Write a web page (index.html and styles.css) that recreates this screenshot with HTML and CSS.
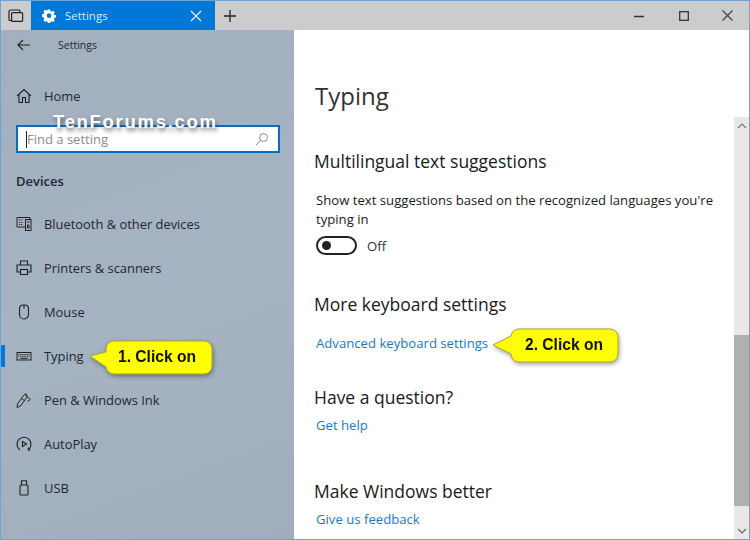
FILE: index.html
```html
<!DOCTYPE html>
<html>
	<head>
		<meta charset="utf-8"/>
		<title>Settings</title>
		<link rel="stylesheet" href="styles.css">
	</head>
	<body>
		<div class="window">
			<div class="titlebar">
				<div class="task-btn">
					<svg width="16" height="16" viewBox="0 0 16 16" fill="none" stroke="#222" stroke-width="1.2"><path d="M3.5 12.5h-1.5a1 1 0 0 1-1-1v-8a1.500 1.500 0 0 1 1.500-1.500h8.500a1 1 0 0 1 1 1v1"/><rect x="3.600" y="4.600" width="11" height="8.800" rx="1"/></svg>
				</div>
				<div class="tab">
					<svg class="tab-gear" width="14" height="14" viewBox="0 0 14 14"><path fill="#fff" fill-rule="evenodd" d="M5.800.5h2.400l.4 1.800 1.100.5 1.600-1 1.700 1.700-1 1.600.5 1.100 1.800.4v2.400l-1.800.4-.5 1.100 1 1.600-1.700 1.700-1.600-1-1.100.5-.4 1.800H5.800l-.4-1.800-1.100-.5-1.600 1L1 11.600l1-1.600-.5-1.100L-.3 8.500V5.500l1.800-.4.5-1.100-1-1.600L2.700.7l1.600 1 1.100-.5zM7 4.600a2.400 2.400 0 1 0 0 4.800 2.400 2.400 0 0 0 0-4.800z" transform="translate(.4 0) scale(.95)"/></svg>
					<span class="tab-name">Settings</span>
					<svg width="12" height="12" viewBox="0 0 12 12" stroke="#e8f2fb" stroke-width="1.300"><path d="M1 1l10 10M11 1L1 11"/></svg>
				</div>
				<div class="new-tab">
					<svg width="14" height="14" viewBox="0 0 14 14" stroke="#222" stroke-width="1.300"><path d="M7 1v12M1 7h12"/></svg>
				</div>
				<div class="win-btns">
					<div class="win-btn"><svg width="10" height="10" viewBox="0 0 10 10" stroke="#333" stroke-width="1.500"><path d="M0 5.500h10"/></svg></div>
					<div class="win-btn"><svg width="10" height="10" viewBox="0 0 10 10" fill="none" stroke="#333" stroke-width="1.300"><rect x=".7" y=".7" width="8.600" height="8.600"/></svg></div>
					<div class="win-btn"><svg width="11" height="11" viewBox="0 0 11 11" stroke="#444" stroke-width="1.200"><path d="M.5.5l10 10M10.500.5l-10 10"/></svg></div>
				</div>
			</div>
			<div class="content">
				<div class="sidebar">
					<div class="back-row">
						<svg width="14" height="12" viewBox="0 0 14 12" fill="none" stroke="#222" stroke-width="1.100"><path d="M13 6H1M6 1L1 6l5 5"/></svg>
						<span>Settings</span>
					</div>
					<div class="nav-item home-item">
						<svg width="16" height="16" viewBox="0 0 16 16" fill="none" stroke="#222" stroke-width="1.100"><path d="M1 8l7-6.500L15 8M3 6.500V14.500h3.500V9.500h3v5H13V6.500"/></svg>
						<span>Home</span>
					</div>
					<div class="search-box">
						<span class="caret"></span>
						<span class="search-txt">Find a setting</span>
						<svg width="14" height="14" viewBox="0 0 14 14" fill="none" stroke="#8a8a8a" stroke-width="1"><circle cx="8.500" cy="5.500" r="4"/><path d="M5.500 8.500L1 13"/></svg>
					</div>
					<div class="group-title">Devices</div>
					<div class="nav-item">
						<svg width="16" height="16" viewBox="0 0 16 16" fill="none" stroke="#222" stroke-width="1"><path d="M9 11H1V1.500h13V3"/><path d="M3 4h4M3 6.500h4M3 8.500h4" stroke-dasharray="1 .8"/><rect x="9.500" y="3.500" width="5.500" height="11"/><path d="M11 6h2.500M11.500 9h1.500v3h-1.500z"/></svg>
						<span>Bluetooth &amp; other devices</span>
					</div>
					<div class="nav-item">
						<svg width="16" height="16" viewBox="0 0 16 16" fill="none" stroke="#222" stroke-width="1.100"><path d="M4.500 5V1h7v4M4 12H1V5h14v7h-3"/><rect x="4.500" y="9.500" width="7" height="5"/></svg>
						<span>Printers &amp; scanners</span>
					</div>
					<div class="nav-item">
						<svg width="16" height="16" viewBox="0 0 16 16" fill="none" stroke="#222" stroke-width="1.100"><path d="M3.500 4.500a3.500 3.500 0 0 1 3-3.500h3a3.500 3.500 0 0 1 3 3.500v6a4.500 4.500 0 0 1-9 0zM8 1v3.500"/></svg>
						<span>Mouse</span>
					</div>
					<div class="nav-item active">
						<svg width="16" height="16" viewBox="0 0 16 16" fill="none" stroke="#222" stroke-width="1"><rect x="1" y="4.500" width="14" height="7.500"/><path d="M2.500 6.500h11M2.500 8.300h11" stroke-dasharray="1 .7"/><path d="M4.500 10.300h7"/></svg>
						<span>Typing</span>
					</div>
					<div class="nav-item">
						<svg width="16" height="16" viewBox="0 0 16 16" fill="none" stroke="#222" stroke-width="1"><path d="M1 15.500l.5-3.500 6-8.500c1-1.300 2.200-1.600 3-1s.8 1.900 0 3.200l-6 8.300z"/><path d="M5.500 6.500l3.300 2.300M9 1.500c1 .5.500 1.500 1.500 3s3.500 1.500 3.500 3c0 1-1.500 1.500-2.500 1.500"/></svg>
						<span>Pen &amp; Windows Ink</span>
					</div>
					<div class="nav-item">
						<svg width="16" height="16" viewBox="0 0 16 16" fill="none" stroke="#222" stroke-width="1.100"><path d="M4 14A7 7 0 1 1 12 14M12 14l.5-2.500M12 14l2.500.3"/><path d="M6.500 5.500l4 2.500-4 2.500z"/></svg>
						<span>AutoPlay</span>
					</div>
					<div class="nav-item">
						<svg width="16" height="16" viewBox="0 0 16 16" fill="none" stroke="#222" stroke-width="1.100"><path d="M5.500 5V.8h5V5"/><rect x="4" y="5" width="8" height="10" rx="1"/></svg>
						<span>USB</span>
					</div>
				</div>
				<div class="main">
					<h1 class="page-title">Typing</h1>
					<h2 class="section-title first">Multilingual text suggestions</h2>
					<p class="body-txt">Show text suggestions based on the recognized languages you're typing in</p>
					<div class="toggle-row">
						<span class="toggle"><span class="toggle-dot"></span></span>
						<span>Off</span>
					</div>
					<h2 class="section-title more">More keyboard settings</h2>
					<a class="link adv-link">Advanced keyboard settings</a>
					<h2 class="section-title question">Have a question?</h2>
					<a class="link">Get help</a>
					<h2 class="section-title better">Make Windows better</h2>
					<a class="link">Give us feedback</a>
				</div>
				<div class="scrollbar">
					<svg class="arrow-up" width="10" height="6" viewBox="0 0 10 6" fill="none" stroke="#777" stroke-width="1.200"><path d="M1 5l4-4 4 4"/></svg>
					<div class="scroll-thumb"></div>
					<svg class="arrow-down" width="10" height="6" viewBox="0 0 10 6" fill="none" stroke="#666" stroke-width="1.200"><path d="M1 1l4 4 4-4"/></svg>
				</div>
			</div>
		</div>

		<div class="watermark">TenForums.com</div>

		<div class="callout callout-one">
			<svg width="126" height="36" viewBox="0 0 126 36"><path d="M26 1h90a8 8 0 0 1 8 8v17a8 8 0 0 1-8 8H26a8 8 0 0 1-8-7L2 16l16-4V9a8 8 0 0 1 8-8z" fill="#ffff00" stroke="#a5a53a"/></svg>
			<span class="callout-txt">1. Click on</span>
		</div>
		<div class="callout callout-two">
			<svg width="130" height="36" viewBox="0 0 130 36"><path d="M28 1h91a8 8 0 0 1 8 8v17a8 8 0 0 1-8 8H28a8 8 0 0 1-8-8l-18-9 18-9a8 8 0 0 1 8-7z" fill="#ffff00" stroke="#a5a53a"/></svg>
			<span class="callout-txt">2. Click on</span>
		</div>
	</body>
</html>
```

FILE: styles.css
```css
html,body{margin: 0;height: 100%;overflow: hidden;}
body{font-family: 'Open Sans', 'Noto Sans', sans-serif;font-size: 14px;color: #222;background: #fff;}
.window{width: 750px;height: 540px;box-sizing: border-box;border: 1px solid #6ea5d6;display: flex;flex-direction: column;}

.titlebar{height: 29px;background: #cccccc;display: flex;align-items: stretch;flex-shrink: 0;}
.task-btn{width: 30px;display: flex;align-items: center;justify-content: center;}
.tab{width: 184px;background: #0078d7;color: #dcebf8;display: flex;align-items: center;padding: 0 13px 0 11px;box-sizing: border-box;}
.tab-name{flex: 1;margin-left: 9px;font-size: 11.500px;}
.new-tab{width: 30px;display: flex;align-items: center;justify-content: center;}
.win-btns{margin-left: auto;display: flex;}
.win-btn{width: 45px;display: flex;align-items: center;justify-content: center;}
.win-btn:last-child{width: 43px;}

.content{flex: 1;display: flex;min-height: 0;}
.sidebar{width: 293px;flex-shrink: 0;background: linear-gradient(160deg, #a2afbe 0%, #a6b3c2 50%, #a0adba 100%);color: #1f2730;}
.back-row{height: 30px;display: flex;align-items: center;padding-left: 16px;font-size: 10.500px;}
.back-row span{margin-left: 27px;}
.nav-item{height: 44px;display: flex;align-items: center;padding-left: 15px;font-size: 12.900px;position: relative;}
.nav-item svg{width: 16px;flex-shrink: 0;margin-right: 12px;}
.home-item{margin-top: 14px;}
.active::before{content: "";position: absolute;left: 0;top: 11px;width: 4px;height: 22px;background: #0078d7;}

.search-box{margin: 7px 14px 0 15px;height: 28px;box-sizing: border-box;border: 2px solid #0a6cc0;background: #fff;display: flex;align-items: center;padding: 0 9px 0 8px;color: #8c8c8c;font-size: 13px;}
.caret{width: 1px;height: 17px;background: #222;}
.search-txt{flex: 1;}
.group-title{margin: 18px 0 10px 15px;height: 21px;line-height: 21px;font-size: 13px;font-weight: 600;}

.main{flex: 1;padding: 49px 0 0 22px;color: #1a1a1a;min-width: 0;}
.page-title{margin: 0 0 0 -1px;font-size: 24px;font-weight: 400;line-height: 34px;color: #333;}
.section-title{margin: 0 0 0 -2px;font-size: 17.500px;font-weight: 400;line-height: 26px;}
.first{margin-top: 35px;}
.body-txt{margin: 17px 0 0;width: 415px;font-size: 13.150px;line-height: 18.500px;}
.toggle-row{display: flex;align-items: center;margin-top: 8px;font-size: 13.150px;color: #333;}
.toggle{width: 41px;height: 19px;box-sizing: border-box;border: 2px solid #222;border-radius: 10px;display: flex;align-items: center;padding-left: 4px;margin-right: 10px;}
.toggle-dot{width: 9px;height: 9px;border-radius: 50%;background: #222;}
.more{margin-top: 36px;}
.question{margin-top: 31px;}
.better{margin-top: 43px;}
.link{display: block;color: #1a78c2;font-size: 13.150px;line-height: 19px;margin-top: 6px;}
.adv-link{margin-top: 17px;}

.scrollbar{width: 15px;margin-top: 87px;background: #e9e7e7;position: relative;flex-shrink: 0;}
.scroll-thumb{position: absolute;left: 0;right: 0;top: 218px;height: 171px;background: #b0b0b0;}
.arrow-up{position: absolute;left: 3px;top: 6px;}
.arrow-down{position: absolute;left: 3px;bottom: 5px;}

.watermark{position: absolute;left: 53px;top: 111px;font-family: 'Liberation Sans', sans-serif;font-weight: bold;font-size: 18.500px;letter-spacing: 1.700px;color: #fff;text-shadow: 1px 3px 4px rgba(50,50,50,.7);}

.callout{position: absolute;display: flex;align-items: center;filter: drop-shadow(1px 2px 2px rgba(0,0,0,.35));}
.callout svg{display: block;}
.callout-txt{position: absolute;right: 18px;top: 7px;font-family: 'Liberation Sans', sans-serif;font-weight: bold;font-size: 15.600px;line-height: 20px;color: #111;}
.callout-one{left: 88px;top: 340px;}
.callout-two{left: 491px;top: 328px;}
```
